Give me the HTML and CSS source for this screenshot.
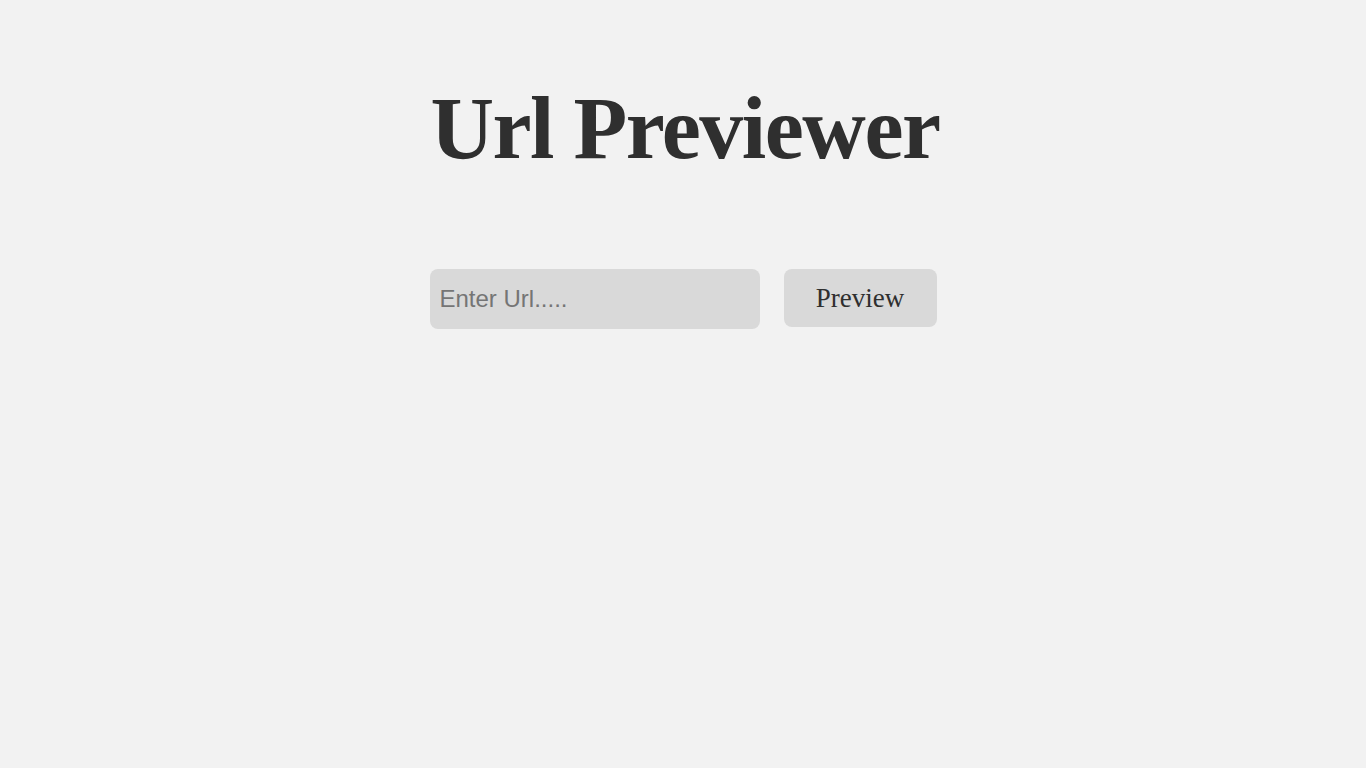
FILE: index.html
```html
<!DOCTYPE html>
<html lang="en">
<head>
<meta charset="utf-8">
<title>Url Previewer</title>
<link rel="stylesheet" href="styles.css">
</head>
<body>
<main class="page">
  <h1 class="title">Url Previewer</h1>
  <form class="search" onsubmit="return false">
    <input class="url-input" type="text" placeholder="Enter Url.....">
    <button class="preview-btn" type="submit">Preview</button>
  </form>
</main>
</body>
</html>
```
FILE: styles.css
```css
html, body {
  margin: 0;
  padding: 0;
  background: #f2f2f2;
}
.page {
  display: flex;
  flex-direction: column;
  align-items: center;
  padding-top: 74px;
}
.title {
  margin: 0 0 0 4px;
  font-family: "Liberation Serif", serif;
  font-weight: 700;
  font-size: 88px;
  line-height: 110px;
  color: #2f2f2f;
  letter-spacing: -1.5px;
}
.search {
  display: flex;
  align-items: flex-start;
  gap: 24px;
  margin-top: 85px;
}
.url-input {
  width: 330px;
  height: 60px;
  box-sizing: border-box;
  border: none;
  border-radius: 8px;
  background: #d9d9d9;
  padding: 0 10px;
  font-family: "Liberation Sans", sans-serif;
  font-size: 24px;
  color: #333;
  outline: none;
}
.url-input::placeholder {
  color: #757575;
}
.preview-btn {
  width: 153px;
  height: 58px;
  border: none;
  border-radius: 8px;
  background: #d9d9d9;
  font-family: "Liberation Serif", serif;
  font-size: 27px;
  color: #2f2f2f;
  cursor: pointer;
  padding-top: 2px;
}
```
